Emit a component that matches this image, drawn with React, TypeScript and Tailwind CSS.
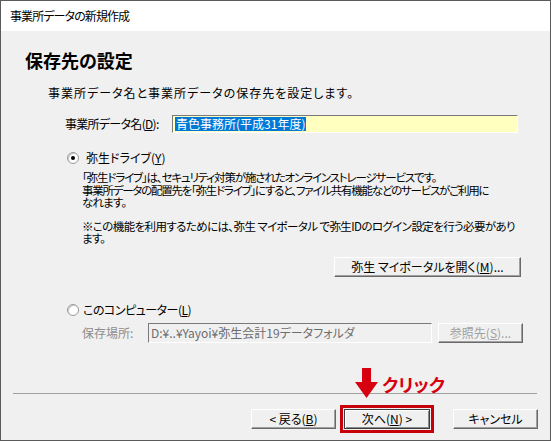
import React from 'react';

const btn =
    'h-[20px] w-[85px] flex items-center justify-center text-[12px] bg-[#f0f0f0] border border-t-white border-l-white border-r-[#696969] border-b-[#696969] shadow-[inset_-1px_-1px_0_#a0a0a0]';

const Radio: React.FC<{ checked?: boolean }> = ({ checked }) => (
    <span className="w-[12px] h-[12px] rounded-full border border-[#9a9a9a] bg-white flex items-center justify-center shadow-[inset_1px_1px_0_#c8c8c8]">
        {checked && <span className="w-[4px] h-[4px] rounded-full bg-black" />}
    </span>
);

const App: React.FC = () => {
    return (
        <div className="w-[551px] h-[441px] border border-[#5a5a5a] flex flex-col text-black font-['Noto_Sans_CJK_JP',sans-serif] [font-feature-settings:'palt'] relative">
            {/* title bar */}
            <div className="h-[30px] bg-white flex items-center pl-[9px] text-[12px] tracking-[-0.9px]">事業所データの新規作成</div>

            <div className="flex-1 bg-[#f0f0f0] flex flex-col">
                <h1 className="pl-[24px] pt-[17px] text-[18px] leading-[24px] font-bold">保存先の設定</h1>
                <p className="pl-[47px] mt-[13px] text-[12px] leading-[16px] tracking-[1px]">事業所データ名と事業所データの保存先を設定します。</p>

                {/* data name */}
                <div className="mt-[14px] flex items-center text-[12px] h-[18px]">
                    <span className="pl-[64px] w-[171px] tracking-[-0.7px]">
                        事業所データ名(<u>D</u>):
                    </span>
                    <div className="w-[346px] h-[18px] bg-[#ffffc0] border border-t-[#7a7a7a] border-l-[#7a7a7a] border-r-white border-b-white flex items-center pl-[2px]">
                        <span className="bg-[#0078d7] text-white leading-[14px] px-[1px]">青色事務所(平成31年度)</span>
                    </div>
                </div>

                {/* yayoi drive */}
                <div className="mt-[17px] flex items-center h-[16px] pl-[66px] gap-[7px] text-[12px]">
                    <Radio checked />
                    <span>
                        弥生ドライブ(<u>Y</u>)
                    </span>
                </div>
                <div className="pl-[81px] mt-[5px] text-[11.5px] leading-[12.5px] tracking-[-0.85px] whitespace-nowrap">
                    <div className="tracking-[-1.15px]">「弥生ドライブ」は、セキュリティ対策が施されたオンラインストレージサービスです。</div>
                    <div className="tracking-[-1.25px]">事業所データの配置先を「弥生ドライブ」にすると、ファイル共有機能などのサービスがご利用に</div>
                    <div>なれます。</div>
                    <div className="h-[11px]" />
                    <div className="tracking-[-0.6px]">※この機能を利用するためには、弥生 マイポータル で弥生IDのログイン設定を行う必要があり</div>
                    <div>ます。</div>
                </div>
                <div className="mt-[12px] flex justify-end pr-[29px]">
                    <button className={btn + ' w-[187px]'}>
                        弥生 マイポータルを開く(<u>M</u>)...
                    </button>
                </div>

                {/* this computer */}
                <div className="mt-[25px] flex items-center h-[16px] pl-[66px] gap-[4px] text-[12px]">
                    <Radio />
                    <span className="tracking-[-0.5px]">
                        このコンピューター(<u>L</u>)
                    </span>
                </div>
                <div className="mt-[5px] flex items-center text-[12px] h-[20px]">
                    <span className="pl-[81px] w-[147px] text-[#8d8d8d]">保存場所:</span>
                    <div className="w-[284px] h-[20px] border border-t-[#7a7a7a] border-l-[#7a7a7a] border-r-white border-b-white flex items-center pl-[2px] text-[#6d6d6d]">
                        D:¥..¥Yayoi¥弥生会計19データフォルダ
                    </div>
                    <button className={btn + ' ml-[6px] w-[82px] text-[#a0a0a0]'}>
                        参照先(<u>S</u>)...
                    </button>
                </div>

                {/* separator */}
                <div className="mt-[50px] ml-[12px] mr-[13px] h-[1px] bg-[#a0a0a0]" />

                {/* bottom buttons */}
                <div className="mt-[11px] flex items-center justify-end pr-[12px]">
                    <button className={btn}>
                        &lt; 戻る(<u>B</u>)
                    </button>
                    <div className="ml-[4px] border-[3px] border-[#c8000a] p-[1px]">
                        <button className="h-[20px] w-[86px] flex items-center justify-center text-[12px] bg-[#f0f0f0] border border-[#3c3c3c] shadow-[inset_1px_1px_0_#fff,inset_-1px_-1px_0_#8a8a8a]">
                            次へ(<u>N</u>) &gt;
                        </button>
                    </div>
                    <button className={btn + ' ml-[19px]'}>キャンセル</button>
                </div>
            </div>

            {/* click annotation */}
            <svg className="absolute left-[354px] top-[367px]" width="23" height="30" viewBox="0 0 23 30">
                <rect x="7" y="0" width="9" height="15" fill="#d6000f" />
                <polygon points="0,14 23,14 11.5,30" fill="#d6000f" />
            </svg>
            <span className="absolute left-[381px] top-[371px] text-[18px] leading-[24px] font-bold text-[#d6000f]">クリック</span>
        </div>
    );
};

export default App;
